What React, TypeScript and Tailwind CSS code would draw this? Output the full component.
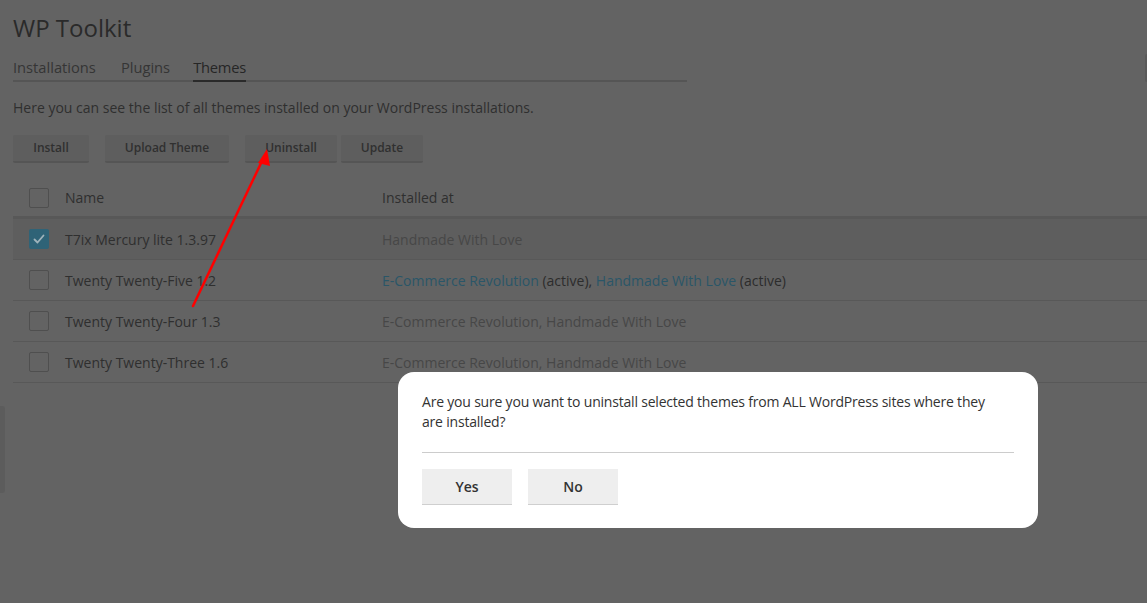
import React from "react";

interface Theme {
  name: string;
  checked: boolean;
  sites: { label: string; active?: boolean; link?: boolean }[];
}

const themes: Theme[] = [
  { name: "T7ix Mercury lite 1.3.97", checked: true, sites: [{ label: "Handmade With Love" }] },
  {
    name: "Twenty Twenty-Five 1.2",
    checked: false,
    sites: [
      { label: "E-Commerce Revolution", active: true, link: true },
      { label: "Handmade With Love", active: true, link: true },
    ],
  },
  {
    name: "Twenty Twenty-Four 1.3",
    checked: false,
    sites: [{ label: "E-Commerce Revolution" }, { label: "Handmade With Love" }],
  },
  {
    name: "Twenty Twenty-Three 1.6",
    checked: false,
    sites: [{ label: "E-Commerce Revolution" }, { label: "Handmade With Love" }],
  },
];

const Checkbox = ({ checked }: { checked: boolean }) =>
  checked ? (
    <span className="w-5 h-5 rounded-[2px] bg-[#2f6377] flex items-center justify-center">
      <svg width="14" height="14" viewBox="0 0 14 14" fill="none">
        <path d="M2.5 7.5l3 3 6-7" stroke="#9fb3bb" strokeWidth="1.8" strokeLinecap="round" strokeLinejoin="round" />
      </svg>
    </span>
  ) : (
    <span className="w-5 h-5 rounded-[2px] border border-[#4f4f4f] bg-[#636363]" />
  );

const ToolButton = ({ label, className }: { label: string; className: string }) => (
  <button
    className={`h-7 bg-[#5e5e5e] border-b-2 border-[#555555] rounded-[2px] text-[12px] font-semibold text-[#303030] ${className}`}
  >
    {label}
  </button>
);

export default function App() {
  return (
    <div
      className="relative w-[1147px] h-[603px] overflow-hidden bg-[#636363] text-[#2c2c2c]"
      style={{ fontFamily: '"Open Sans", "Noto Sans", sans-serif' }}
    >
      <div className="pl-[13px] pt-[12px]">
        <h1 className="text-[24px] leading-[32px] text-[#2a2a2a]">WP Toolkit</h1>

        <div className="mt-[13px] w-[674px] flex border-b-2 border-[#555555] text-[14.7px] leading-[20px]">
          <span className="pb-[3px] text-[#353535]">Installations</span>
          <span className="ml-[25px] pb-[3px] text-[#353535]">Plugins</span>
          <span className="ml-[23px] pb-[3px] -mb-[2px] border-b-2 border-[#2a2a2a] font-medium text-[#262626] tracking-[-0.2px]">
            Themes
          </span>
        </div>

        <p className="mt-[16px] text-[14px] leading-[20px] text-[#2f2f2f]">
          Here you can see the list of all themes installed on your WordPress installations.
        </p>

        <div className="mt-[17px] flex">
          <ToolButton label="Install" className="w-[76px]" />
          <ToolButton label="Upload Theme" className="w-[124px] ml-[16px]" />
          <ToolButton label="Uninstall" className="w-[92px] ml-[16px]" />
          <ToolButton label="Update" className="w-[82px] ml-[4px]" />
        </div>

        <div className="mt-[16px] text-[14px]">
          <div className="h-[40px] flex items-center border-b-[3px] border-[#585858]">
            <div className="w-[52px] pl-[16px] flex">
              <Checkbox checked={false} />
            </div>
            <div className="w-[317px] text-[#2f2f2f]">Name</div>
            <div className="text-[#2f2f2f]">Installed at</div>
          </div>
          {themes.map((t) => (
            <div
              key={t.name}
              className={`h-[41px] flex items-center border-b border-[#585858] ${t.checked ? "bg-[#5e5e5e]" : ""}`}
            >
              <div className="w-[52px] pl-[16px] flex">
                <Checkbox checked={t.checked} />
              </div>
              <div className="w-[317px] text-[#2f2f2f]">{t.name}</div>
              <div>
                {t.sites.map((s, i) => (
                  <span key={s.label}>
                    <span className={s.link ? "text-[#2a5668]" : "text-[#474747]"}>{s.label}</span>
                    {s.active && <span className="text-[#2c2c2c]"> (active)</span>}
                    {i < t.sites.length - 1 && <span className={s.link ? "text-[#2c2c2c]" : "text-[#474747]"}>, </span>}
                  </span>
                ))}
              </div>
            </div>
          ))}
        </div>
      </div>

      {/* side feedback tab edge */}
      <div className="absolute left-0 top-[406px] w-[5px] h-[87px] rounded-r-[3px] bg-[#5c5c5c]" />
      <div className="absolute right-0 top-[54px] w-[2px] h-[28px] rounded-l-[2px] bg-[#5a5a5a]" />

      {/* annotation arrow */}
      <svg className="absolute left-0 top-0 pointer-events-none" width="1147" height="603">
        <line x1="193" y1="306" x2="263" y2="159" stroke="#ff0000" strokeWidth="2.5" strokeLinecap="round" />
        <polygon points="267,149 258,163 270,166" fill="#ff0000" />
      </svg>

      {/* confirm dialog */}
      <div className="absolute left-[398px] top-[372px] w-[640px] rounded-[16px] bg-white px-[24px] pt-[20px] pb-[23px]">
        <p className="text-[14px] leading-[20px] text-[#333333] tracking-[-0.2px] pr-[10px]">
          Are you sure you want to uninstall selected themes from ALL WordPress sites where they are installed?
        </p>
        <div className="mt-[20px] h-px bg-[#cccccc]" />
        <div className="mt-[16px] flex gap-[16px]">
          <button className="w-[90px] h-[36px] bg-[#eeeeee] border-b border-[#cfcfcf] text-[14px] font-semibold text-[#333333]">
            Yes
          </button>
          <button className="w-[90px] h-[36px] bg-[#eeeeee] border-b border-[#cfcfcf] text-[14px] font-semibold text-[#333333]">
            No
          </button>
        </div>
      </div>
    </div>
  );
}
